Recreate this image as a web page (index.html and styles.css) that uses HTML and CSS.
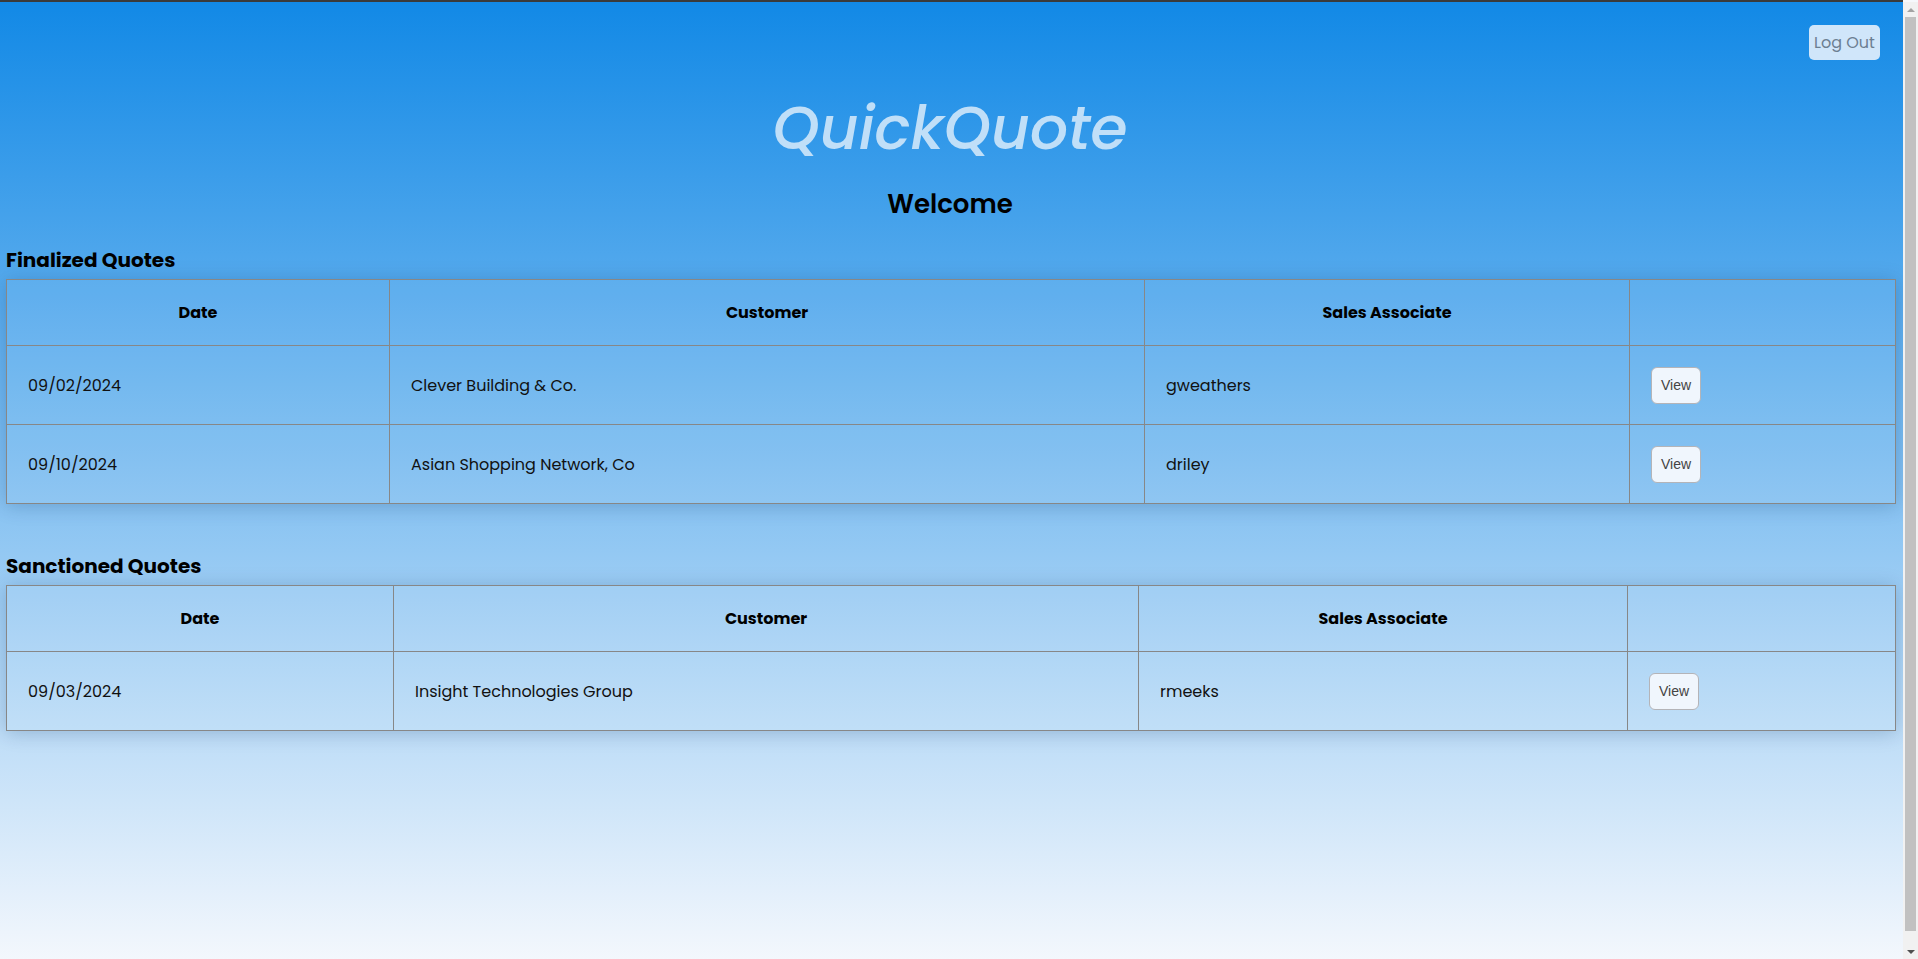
FILE: index.html
```html
<!DOCTYPE html>
<html lang="en">
<head>
<meta charset="utf-8">
<title>QuickQuote</title>
<link rel="stylesheet" href="styles.css">
</head>
<body>
<div class="page">
  <header class="topbar">
    <button class="logout" type="button">Log Out</button>
  </header>
  <h1 class="brand">QuickQuote</h1>
  <h2 class="welcome">Welcome</h2>

  <section class="quotes">
    <h3 class="section-title">Finalized Quotes</h3>
    <table class="qtable">
      <colgroup>
        <col class="f-c1"><col class="f-c2"><col class="f-c3"><col class="f-c4">
      </colgroup>
      <thead>
        <tr><th>Date</th><th>Customer</th><th>Sales Associate</th><th></th></tr>
      </thead>
      <tbody>
        <tr><td>09/02/2024</td><td>Clever Building &amp; Co.</td><td>gweathers</td><td><button class="view" type="button">View</button></td></tr>
        <tr><td>09/10/2024</td><td>Asian Shopping Network, Co</td><td>driley</td><td><button class="view" type="button">View</button></td></tr>
      </tbody>
    </table>
  </section>

  <section class="quotes second">
    <h3 class="section-title">Sanctioned Quotes</h3>
    <table class="qtable">
      <colgroup>
        <col class="s-c1"><col class="s-c2"><col class="s-c3"><col class="s-c4">
      </colgroup>
      <thead>
        <tr><th>Date</th><th>Customer</th><th>Sales Associate</th><th></th></tr>
      </thead>
      <tbody>
        <tr><td>09/03/2024</td><td>Insight Technologies Group</td><td>rmeeks</td><td><button class="view" type="button">View</button></td></tr>
      </tbody>
    </table>
  </section>
</div>
<div class="scrollbar" aria-hidden="true">
  <div class="sb-btn"><span class="sb-up"></span></div>
  <div class="sb-track"><div class="sb-thumb"></div></div>
  <div class="sb-btn"><span class="sb-down"></span></div>
</div>
</body>
</html>
```

FILE: styles.css
```css
html {
  background: #f6f8fc;
}
body {
  margin: 0 15px 0 0;
  border-top: 2px solid #3a3a3a;
  min-height: calc(100vh + 14px);
  background: linear-gradient(to bottom, #1289e6 0%, #f7f9fd 100%);
  font-family: "Poppins", "Open Sans", sans-serif;
  color: #111;
}
.page {
  padding: 0 9px 0 6px;
}
.topbar {
  display: flex;
  justify-content: flex-end;
  padding: 23px 14px 0 0;
}
.logout {
  width: 71px;
  height: 35px;
  border: none;
  border-radius: 5px;
  background: #d0e6fa;
  color: #6c7f92;
  font-family: "Poppins", "Open Sans", sans-serif;
  font-size: 16px;
  padding: 0;
}
.brand {
  margin: 32px 0 0 0;
  text-align: center;
  font-size: 60px;
  font-style: italic;
  font-weight: 500;
  color: #c0dff8;
  line-height: 72px;
}
.welcome {
  margin: 23px 0 0 0;
  text-align: center;
  font-size: 26px;
  font-weight: 600;
  color: #000;
  line-height: 34px;
}
.quotes {
  margin-top: 26px;
}
.quotes.second {
  margin-top: 49px;
}
.section-title {
  margin: 0 0 6px 0;
  font-size: 20px;
  font-weight: 700;
  color: #000;
  line-height: 26px;
}
.qtable {
  width: 1889px;
  table-layout: fixed;
  border-collapse: collapse;
  background: rgba(255, 255, 255, 0.06);
  box-shadow: 0 2px 18px rgba(0, 40, 90, 0.22);
}
.qtable th,
.qtable td {
  border: 1px solid #878787;
  padding: 0 21px;
}
.qtable th {
  height: 65px;
  font-size: 16px;
  font-weight: 700;
  color: #000;
  text-align: center;
}
.qtable td {
  height: 78px;
  font-size: 16px;
  text-align: left;
}
.f-c1 { width: 383px; }
.f-c2 { width: 755px; }
.f-c3 { width: 485px; }
.f-c4 { width: 266px; }
.s-c1 { width: 387px; }
.s-c2 { width: 745px; }
.s-c3 { width: 489px; }
.s-c4 { width: 268px; }
.view {
  width: 50px;
  height: 37px;
  border: 1px solid #b4b4b8;
  border-radius: 6px;
  background: #f0f6fd;
  color: #444;
  font-family: "Liberation Sans", Arial, sans-serif;
  font-size: 14px;
  padding: 0;
}
.scrollbar {
  position: fixed;
  top: 2px;
  right: 0;
  bottom: 0;
  width: 15px;
  display: flex;
  flex-direction: column;
  background: #f1f1f1;
}
.sb-btn {
  height: 15px;
  display: flex;
  align-items: center;
  justify-content: center;
}
.sb-up {
  width: 0;
  height: 0;
  border-left: 4px solid transparent;
  border-right: 4px solid transparent;
  border-bottom: 4px solid #a3a3a3;
}
.sb-down {
  width: 0;
  height: 0;
  border-left: 4px solid transparent;
  border-right: 4px solid transparent;
  border-top: 4px solid #505050;
}
.sb-track {
  flex: 1;
  padding: 0 2px 13px 2px;
  display: flex;
}
.sb-thumb {
  flex: 1;
  background: #c1c1c1;
}
```
